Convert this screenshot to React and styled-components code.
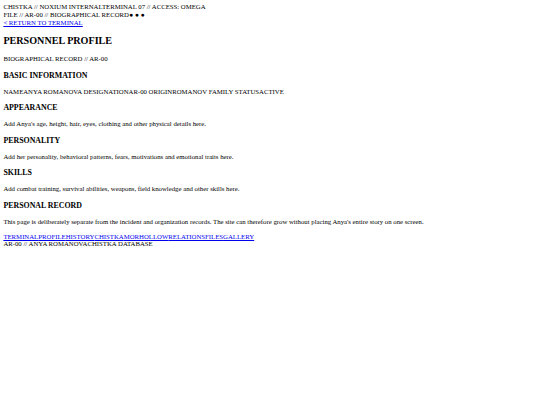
import styled, { createGlobalStyle } from "styled-components";

const GlobalStyle = createGlobalStyle`
  body {
    margin: 3.375px;
    font-family: "Liberation Serif", "Times New Roman", serif;
    font-size: 6.75px;
    line-height: 1.15;
    color: #000;
    background: #fff;
  }
`;

const Header = styled.header``;

const Line = styled.div``;

const Dot = styled.span`
  margin-left: ${(props) => (props.first ? "0" : "0.25em")};
`;

const TextLink = styled.a`
  color: #0000ee;
  text-decoration: underline;
`;

const Main = styled.section``;

const Title = styled.h1`
  font-size: 1.5em;
  font-weight: bold;
  margin: 0.83em 0;
`;

const Para = styled.p`
  margin: 1em 0;
`;

const SectionTitle = styled.h3`
  font-size: 1.17em;
  font-weight: bold;
  margin: 1em 0;
`;

const InfoRow = styled.div`
  margin: 1em 0;
`;

const Nav = styled.nav``;

const Footer = styled.footer``;

const info = [
  ["NAME", "ANYA ROMANOVA"],
  ["DESIGNATION", "AR-00"],
  ["ORIGIN", "ROMANOV FAMILY"],
  ["STATUS", "ACTIVE"],
];

const sections = [
  ["APPEARANCE", "Add Anya's age, height, hair, eyes, clothing and other physical details here."],
  ["PERSONALITY", "Add her personality, behavioral patterns, fears, motivations and emotional traits here."],
  ["SKILLS", "Add combat training, survival abilities, weapons, field knowledge and other skills here."],
  [
    "PERSONAL RECORD",
    "This page is deliberately separate from the incident and organization records. The site can therefore grow without placing Anya's entire story on one screen.",
  ],
];

const links = ["TERMINAL", "PROFILE", "HISTORY", "CHISTKA", "MORHOLLOW", "RELATIONS", "FILES", "GALLERY"];

export default function App() {
  return (
    <>
      <GlobalStyle />
      <Header>
        <Line>
          <span>CHISTKA // NOXIUM INTERNAL</span>
          <span>TERMINAL 07 // ACCESS: OMEGA</span>
        </Line>
        <Line>
          <span>FILE // AR-00 // BIOGRAPHICAL RECORD</span>
          <Dot first>●</Dot>
          <Dot>●</Dot>
          <Dot>●</Dot>
        </Line>
        <TextLink href="#">&lt; RETURN TO TERMINAL</TextLink>
      </Header>
      <Main>
        <Title>PERSONNEL PROFILE</Title>
        <Para>BIOGRAPHICAL RECORD // AR-00</Para>
        <SectionTitle>BASIC INFORMATION</SectionTitle>
        <InfoRow>
          {info.map(([label, value], i) => (
            <span key={label}>
              {i > 0 && " "}
              <span>{label}</span>
              <span>{value}</span>
            </span>
          ))}
        </InfoRow>
        {sections.map(([title, text]) => (
          <div key={title}>
            <SectionTitle>{title}</SectionTitle>
            <Para>{text}</Para>
          </div>
        ))}
      </Main>
      <Nav>
        {links.map((l) => (
          <TextLink key={l} href="#">
            {l}
          </TextLink>
        ))}
      </Nav>
      <Footer>
        <span>AR-00 // ANYA ROMANOVA</span>
        <span>CHISTKA DATABASE</span>
      </Footer>
    </>
  );
}
